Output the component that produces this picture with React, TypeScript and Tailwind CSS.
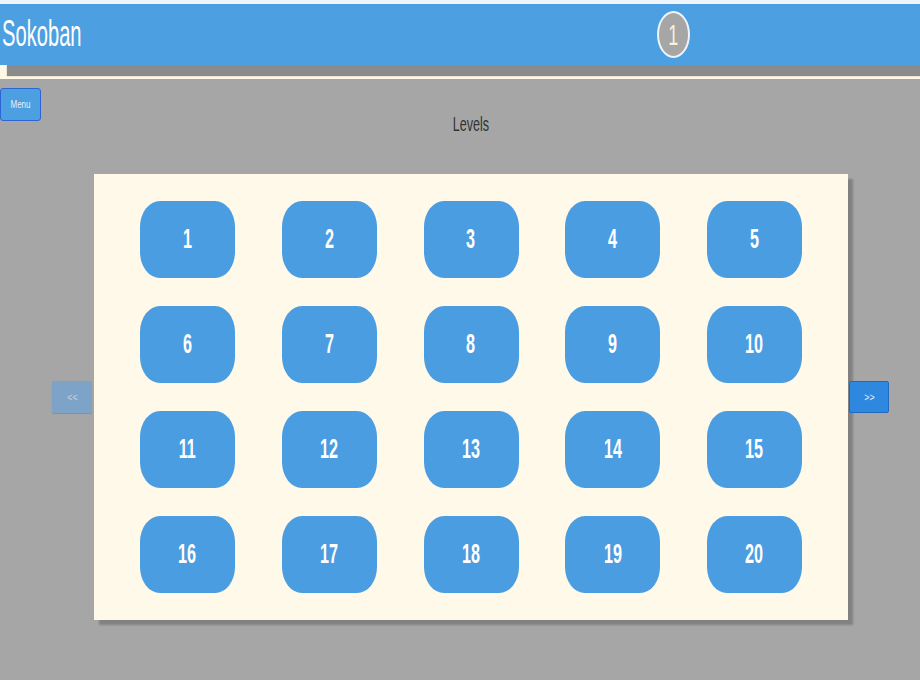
const levels = Array.from({ length: 20 }, (_, i) => i + 1);

export default function App() {
    return (
        <div className="w-[920px] h-[680px] overflow-hidden bg-[#a6a6a6] font-['Liberation_Sans',Arial,sans-serif]">
            {/* Header strip */}
            <div className="h-[4px] bg-[#eef5fb]" />
            <div className="bg-[#fff8e6] pb-[14px]">
                <div className="h-[61px] bg-[#4c9fe1] flex items-center shadow-[7px_11px_1px_#8b8b8b]">
                    <div className="w-[657px] shrink-0 pl-[2px]">
                        <span className="inline-block origin-left scale-x-[0.56] text-[36px] leading-none text-white">
                            Sokoban
                        </span>
                    </div>
                    <div className="w-[33px] h-[47px] rounded-[50%] bg-[#a6a6a6] border-2 border-[#eef4fa] flex items-center justify-center">
                        <span className="inline-block scale-x-[0.6] text-[30px] leading-none text-[#f6f1dc]">1</span>
                    </div>
                </div>
            </div>

            {/* Menu + title */}
            <div className="flex items-start pt-[9px]">
                <button className="w-[41px] h-[33px] shrink-0 bg-[#4c9fe1] border border-[#2c66d4] rounded-[3px] flex items-center justify-center">
                    <span className="inline-block scale-x-[0.8] text-[10px] leading-none text-[#e8eef8]">Menu</span>
                </button>
                <div className="flex-1 pt-[26px] pr-[19px] text-center leading-[20px]">
                    <span className="inline-block scale-x-[0.63] text-[20px] text-[#333]">Levels</span>
                </div>
            </div>

            {/* Board row */}
            <div className="flex items-center mt-[38px] ml-[52px]">
                <button className="w-[40px] h-[32px] bg-[#7ea3c8] rounded-[2px] shadow-[0_1px_1px_rgba(0,0,0,0.15)] flex items-center justify-center">
                    <span className="inline-block scale-x-[0.8] text-[11px] leading-none text-[#c6d3e2]">&lt;&lt;</span>
                </button>
                <div className="ml-[2px] w-[754px] h-[446px] bg-[#fff9e9] shadow-[5px_5px_2px_rgba(0,0,0,0.22)] px-[46px] pt-[27px]">
                    <div className="grid grid-cols-[repeat(5,95px)] justify-between gap-y-[28px]">
                        {levels.map((n) => (
                            <button
                                key={n}
                                className="h-[77px] bg-[#4b9de2] rounded-[20px/26px] flex items-center justify-center"
                            >
                                <span className="inline-block scale-x-[0.6] text-[27px] font-bold leading-none text-white">
                                    {n}
                                </span>
                            </button>
                        ))}
                    </div>
                </div>
                <button className="ml-[1px] w-[40px] h-[32px] bg-[#2f88e0] border border-[#2069c0] rounded-[2px] flex items-center justify-center">
                    <span className="inline-block scale-x-[0.8] text-[11px] leading-none text-[#e6effa]">&gt;&gt;</span>
                </button>
            </div>
        </div>
    );
}
